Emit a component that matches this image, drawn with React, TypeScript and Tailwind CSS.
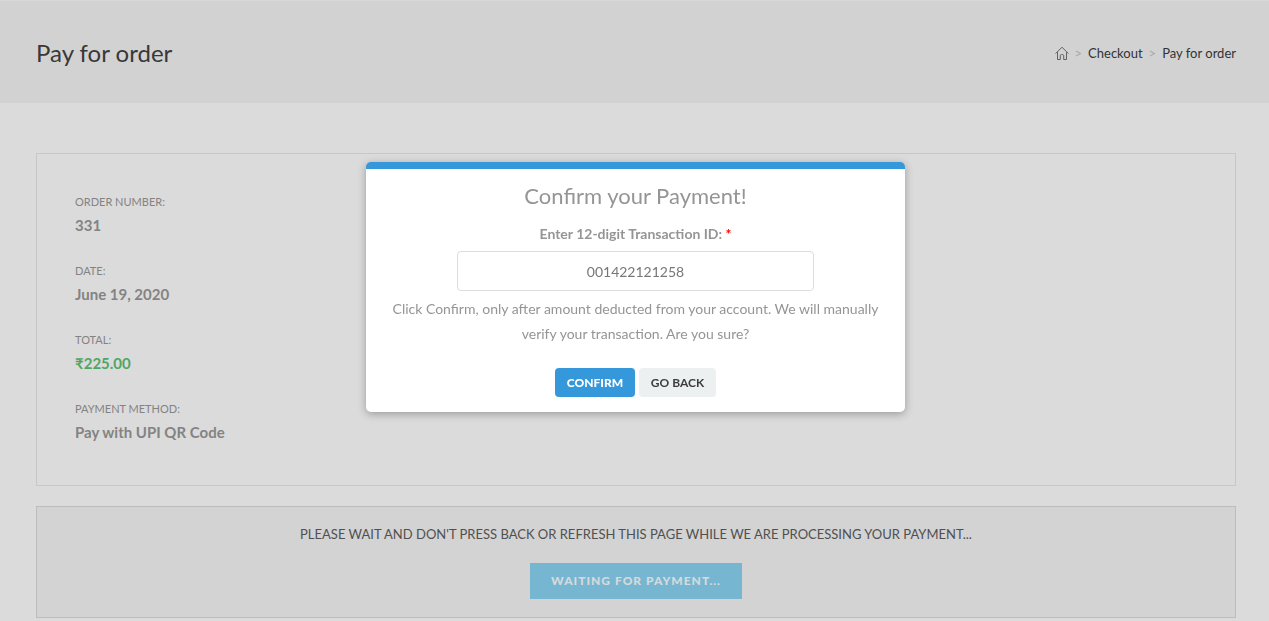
import React from "react";

const details = [
  { label: "Order number:", value: "331", color: "text-[#838383]" },
  { label: "Date:", value: "June 19, 2020", color: "text-[#838383]" },
  { label: "Total:", value: "₹225.00", color: "text-[#4fa664]" },
  { label: "Payment method:", value: "Pay with UPI QR Code", color: "text-[#838383]" },
];

function HomeIcon() {
  return (
    <svg viewBox="0 0 14 14" className="size-3.5" fill="none" stroke="currentColor" strokeWidth="0.9">
      <path d="M0.6 7.6 7 1.2l6.4 6.4M2.5 6.2v7.3h2.8V9.6q0-1 1-1h1.4q1 0 1 1v3.9h2.8V6.2" />
    </svg>
  );
}

function ConfirmDialog() {
  return (
    <div className="fixed top-[162px] right-0 left-0.5 z-10 flex justify-center">
      <section
        role="dialog"
        aria-labelledby="dialog-title"
        className="w-[539px] rounded-[5px] border-t-[7px] border-[#3498db] bg-white px-4 pt-[11px] pb-[15px] text-center text-[#959595] shadow-[0_2px_8px_rgba(0,0,0,0.3)]"
      >
        <h2 id="dialog-title" className="text-[22px] leading-8">Confirm your Payment!</h2>
        <form onSubmit={(e) => e.preventDefault()}>
          <label htmlFor="transaction" className="mt-[9px] block text-[14px] leading-[26px] font-bold">
            Enter 12-digit Transaction ID: <span className="text-[#ff0000]">*</span>
          </label>
          <input
            id="transaction"
            defaultValue="001422121258"
            className="mt-1 h-10 w-[357px] rounded-[4px] border border-[#dddddd] bg-white text-center text-[14px] text-[#777777] outline-none"
          />
          <p className="mt-[5px] px-2 text-[14px] leading-[25px]">
            Click Confirm, only after amount deducted from your account. We will manually verify your transaction. Are you sure?
          </p>
          <div className="mt-[22px] flex justify-center gap-1">
            <button className="h-[29px] w-20 rounded-[4px] bg-[#3498db] text-[12px] font-black text-white uppercase">Confirm</button>
            <button type="button" className="h-[29px] w-[77px] rounded-[4px] bg-[#ecf0f1] text-[12px] font-bold text-[#3c3c3c] uppercase">Go back</button>
          </div>
        </form>
      </section>
    </div>
  );
}

export default function App() {
  return (
    <div className="min-h-screen bg-[#dbdbdb] font-[Lato,sans-serif]">
      <header className="flex h-[103px] items-center justify-between border-t border-[#d9d9d9] bg-[#d2d2d2] pt-0.5 pr-[33px] pl-9">
        <h1 className="text-[24px] text-[#383838]">Pay for order</h1>
        <nav aria-label="Breadcrumb" className="flex items-center gap-1.5 text-[13px] leading-[22px] text-[#333333]">
          <a href="#" aria-label="Home" className="text-[#555555]"><HomeIcon /></a>
          <span className="text-[13px] text-[#a8a8a8]">&gt;</span>
          <a href="#">Checkout</a>
          <span className="text-[13px] text-[#a8a8a8]">&gt;</span>
          <a href="#">Pay for order</a>
        </nav>
      </header>
      <main className="pt-[50px] pr-[33px] pl-9">
        <ul className="flex h-[333px] flex-col gap-[26px] border border-[#c7c7c7] px-[38px] pt-10">
          {details.map((d) => (
            <li key={d.label}>
              <div className="text-[11px] leading-4 text-[#838383] uppercase">{d.label}</div>
              <strong className={`mt-[3px] block text-[15px] leading-6 ${d.color}`}>{d.value}</strong>
            </li>
          ))}
        </ul>
        <section className="mt-5 flex h-28 flex-col items-center border border-[#bcbcbc] bg-[#d3d3d3] pt-[15px]">
          <p className="text-[13px] leading-6 text-[#505050] uppercase">Please wait and don't press back or refresh this page while we are processing your payment...</p>
          <button className="mt-[17px] h-9 w-[212px] bg-[#77b6d0] text-[12px] font-black tracking-[1px] text-[#d5dadd] uppercase">Waiting for payment...</button>
        </section>
      </main>
      <ConfirmDialog />
    </div>
  );
}
